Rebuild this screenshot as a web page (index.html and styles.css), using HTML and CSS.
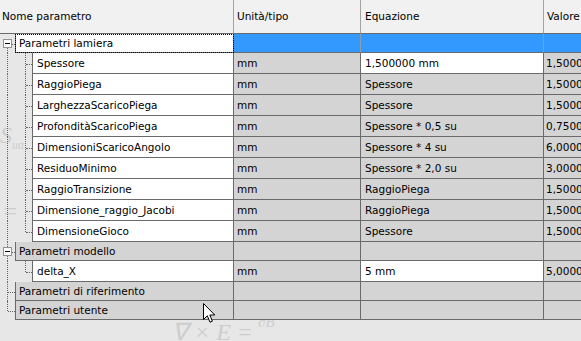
FILE: index.html
```html
<!DOCTYPE html>
<html lang="it">
<head>
<meta charset="utf-8">
<title>Parametri</title>
<link rel="stylesheet" href="styles.css">
</head>
<body>
<div class="bg-math">
  <span class="m1">S<sub>ua</sub></span>
  <span class="m2">=</span>
  <span class="m3">&part;B</span>
  <span class="m4">&nabla; &times; E =</span>
</div>

<div class="params">
  <div class="row head">
    <div class="c name">Nome parametro</div>
    <div class="c unit">Unità/tipo</div>
    <div class="c eq">Equazione</div>
    <div class="c val">Valore</div>
  </div>

  <div class="row group sel">
    <div class="tree"><span class="lane l0 from-mid stub"><i class="box"></i></span></div>
    <div class="c name focus">Parametri lamiera</div>
    <div class="c unit"></div>
    <div class="c eq"></div>
    <div class="c val"></div>
  </div>
  <div class="row child">
    <div class="tree"><span class="lane l0"></span><span class="lane l1 stub"></span></div>
    <div class="c name">Spessore</div>
    <div class="c unit">mm</div>
    <div class="c eq edit">1,500000 mm</div>
    <div class="c val">1,500000 mm</div>
  </div>
  <div class="row child">
    <div class="tree"><span class="lane l0"></span><span class="lane l1 stub"></span></div>
    <div class="c name">RaggioPiega</div>
    <div class="c unit">mm</div>
    <div class="c eq">Spessore</div>
    <div class="c val">1,500000 mm</div>
  </div>
  <div class="row child">
    <div class="tree"><span class="lane l0"></span><span class="lane l1 stub"></span></div>
    <div class="c name">LarghezzaScaricoPiega</div>
    <div class="c unit">mm</div>
    <div class="c eq">Spessore</div>
    <div class="c val">1,500000 mm</div>
  </div>
  <div class="row child">
    <div class="tree"><span class="lane l0"></span><span class="lane l1 stub"></span></div>
    <div class="c name">ProfonditàScaricoPiega</div>
    <div class="c unit">mm</div>
    <div class="c eq">Spessore * 0,5 su</div>
    <div class="c val">0,750000 mm</div>
  </div>
  <div class="row child">
    <div class="tree"><span class="lane l0"></span><span class="lane l1 stub"></span></div>
    <div class="c name">DimensioniScaricoAngolo</div>
    <div class="c unit">mm</div>
    <div class="c eq">Spessore * 4 su</div>
    <div class="c val">6,000000 mm</div>
  </div>
  <div class="row child">
    <div class="tree"><span class="lane l0"></span><span class="lane l1 stub"></span></div>
    <div class="c name">ResiduoMinimo</div>
    <div class="c unit">mm</div>
    <div class="c eq">Spessore * 2,0 su</div>
    <div class="c val">3,000000 mm</div>
  </div>
  <div class="row child">
    <div class="tree"><span class="lane l0"></span><span class="lane l1 stub"></span></div>
    <div class="c name">RaggioTransizione</div>
    <div class="c unit">mm</div>
    <div class="c eq">RaggioPiega</div>
    <div class="c val">1,500000 mm</div>
  </div>
  <div class="row child">
    <div class="tree"><span class="lane l0"></span><span class="lane l1 stub"></span></div>
    <div class="c name">Dimensione_raggio_Jacobi</div>
    <div class="c unit">mm</div>
    <div class="c eq">RaggioPiega</div>
    <div class="c val">1,500000 mm</div>
  </div>
  <div class="row child">
    <div class="tree"><span class="lane l0"></span><span class="lane l1 to-mid stub"></span></div>
    <div class="c name">DimensioneGioco</div>
    <div class="c unit">mm</div>
    <div class="c eq">Spessore</div>
    <div class="c val">1,500000 mm</div>
  </div>

  <div class="row group">
    <div class="tree"><span class="lane l0 stub"><i class="box"></i></span></div>
    <div class="c name">Parametri modello</div>
    <div class="c unit"></div>
    <div class="c eq"></div>
    <div class="c val"></div>
  </div>
  <div class="row child">
    <div class="tree"><span class="lane l0"></span><span class="lane l1 to-mid stub"></span></div>
    <div class="c name">delta_X</div>
    <div class="c unit">mm</div>
    <div class="c eq edit">5 mm</div>
    <div class="c val">5,000000 mm</div>
  </div>

  <div class="row group">
    <div class="tree"><span class="lane l0 stub"></span></div>
    <div class="c name">Parametri di riferimento</div>
    <div class="c unit"></div>
    <div class="c eq"></div>
    <div class="c val"></div>
  </div>
  <div class="row group">
    <div class="tree"><span class="lane l0 to-mid stub"></span></div>
    <div class="c name">Parametri utente</div>
    <div class="c unit"></div>
    <div class="c eq"></div>
    <div class="c val"></div>
  </div>
</div>

<svg class="cursor" width="13" height="21" viewBox="0 0 13 21">
  <path d="M0.5 0.5 L0.5 16.5 L4.3 12.8 L7 19.2 L9.4 18.2 L6.8 12 L11.8 12 Z" fill="#fff" stroke="#000" stroke-width="1" stroke-linejoin="miter"/>
</svg>
</body>
</html>
```

FILE: styles.css
```css
*{margin:0;padding:0;box-sizing:border-box}
html,body{height:100%}
body{position:relative;overflow:hidden;background-color:#e7e7e7;font-family:"DejaVu Sans",Verdana,sans-serif;font-size:10.5px;color:#000}

/* faint formulas printed on the backdrop */
.bg-math{font-family:"Liberation Serif",serif;font-style:italic;color:#cdcdcd}
.bg-math span{position:absolute;white-space:nowrap}
.bg-math .m1{left:0;top:122px;font-size:24px}
.bg-math .m1 sub{font-size:12px}
.bg-math .m2{left:2px;top:198px;font-size:24px}
.bg-math .m3{left:258px;top:314px;font-size:15px}
.bg-math .m4{left:172px;top:318px;font-size:24px}

.params{position:relative;width:100%}
.row{display:flex;width:100%}
.row .c{flex:none;display:flex;align-items:center;overflow:hidden;white-space:nowrap;border-right:1px solid #6a6a6a;border-bottom:1px solid #6a6a6a;background-color:#d4d4d4}
.row .unit{width:127px;padding-left:3px}
.row .eq{width:183px;padding-left:4px}
.row .val{flex:1 1 auto;padding-left:2px;border-right:0}

.head{height:34px}
.head .c{background-color:#f1f1f1;border-right-color:#a3a3a3;border-bottom-color:#6a6a6a;padding-bottom:1px}
.head .name{width:234px;padding-left:2px}
.head .val{padding-left:3px}

.group{height:19px}
.group .name{width:219px;padding-left:3px;border-left:1px solid #6a6a6a}
.child{height:21px}
.child .name{width:202px;padding-left:4px;border-left:1px solid #6a6a6a;background-color:#fff}
.child .edit{background-color:#fff}

.sel .unit,.sel .eq,.sel .val{background-color:#3399ff;border-right-color:#8a9cb0}
.sel .name.focus{background-color:#fff;outline:1px dotted #000;outline-offset:-1px}

/* tree lines */
.tree{flex:none;display:flex;height:100%}
.lane{position:relative;display:block;height:100%}
.lane.l0{width:15px}
.lane.l1{width:17px}
.lane::before{content:"";position:absolute;top:0;bottom:0;border-left:1px dotted #666}
.lane.l0::before{left:7px}
.lane.l1::before{left:10px}
.lane.from-mid::before{top:50%}
.lane.to-mid::before{bottom:50%}
.lane.stub::after{content:"";position:absolute;top:50%;right:0;border-top:1px dotted #666}
.lane.l0.stub::after{left:8px}
.lane.l1.stub::after{left:11px}
.box{position:absolute;left:3px;top:50%;width:9px;height:9px;margin-top:-5px;border:1px solid #929292;background-color:#fff;z-index:1}
.box::after{content:"";position:absolute;left:1px;top:3px;width:5px;height:1px;background-color:#000}

.cursor{position:absolute;left:203px;top:303px}
```
